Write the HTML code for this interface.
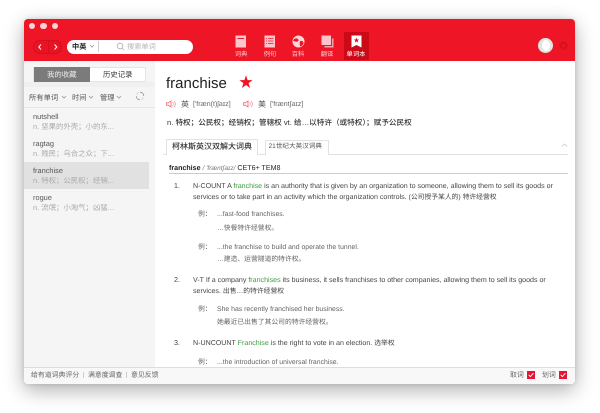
<!DOCTYPE html>
<html lang="zh"><head><meta charset="utf-8"><title>franchise</title>
<style>
*{box-sizing:border-box}
html,body{margin:0;padding:0;width:600px;height:413px;overflow:hidden;background:#fff}
body{font-family:"Liberation Sans","Noto Sans CJK SC",sans-serif;position:relative;text-rendering:geometricPrecision;filter:blur(.3px)}
#win{position:absolute;left:24px;top:19px;width:551px;height:365px;border-radius:4px;background:#fff;box-shadow:0 6px 20px rgba(0,0,0,.32),0 0 5px rgba(0,0,0,.12)}
.a{position:absolute;white-space:nowrap;line-height:12px}
.b{position:absolute}
.g{color:#3a9a3e}
.d{font-size:7.08px;color:#444}
.e{font-size:6.88px;color:#666}
.z{font-size:6.8px}
.l{font-size:6.3px;color:#ffc4cb;text-align:center;width:30px}
.s{font-size:7.3px;color:#555}
.w{font-size:7.4px;color:#555}
.m{font-size:7.4px;color:#aaa}
.f{font-size:6.9px;color:#666}
</style></head><body>
<div id="win"></div>
<!-- header -->
<div class="b" style="left:24px;top:19px;width:551px;height:42px;background:#ee1626;border-radius:4px 4px 0 0"></div>
<div class="b" style="left:28.8px;top:22.8px;width:6.5px;height:6.5px;border-radius:50%;background:#f9d3d6"></div>
<div class="b" style="left:40.3px;top:22.8px;width:6.5px;height:6.5px;border-radius:50%;background:#f9d3d6"></div>
<div class="b" style="left:51.8px;top:22.8px;width:6.5px;height:6.5px;border-radius:50%;background:#f9d3d6"></div>
<!-- nav -->
<div class="b" style="left:33px;top:39.5px;width:29px;height:14px;border-radius:7px;border:1px solid #d40f1e;background:#e91423"></div>
<div class="b" style="left:47.5px;top:40px;width:1px;height:13px;background:#d40f1e"></div>
<svg class="b" style="left:36px;top:42px" width="24" height="10" viewBox="0 0 24 10"><path d="M5 2.5L2.8 5L5 7.5" fill="none" stroke="#fff" stroke-width="1"/><path d="M18.6 2.5L20.8 5L18.6 7.5" fill="none" stroke="#fff" stroke-width="1"/></svg>
<!-- search -->
<div class="b" style="left:67px;top:39.5px;width:126px;height:14px;border-radius:7px;background:#fff"></div>
<div class="a" style="left:72px;top:40.5px;font-size:7.2px;color:#222;font-weight:bold">中英</div>
<svg class="b" style="left:89px;top:44px" width="6" height="5" viewBox="0 0 6 5"><path d="M1 1L3 3.2L5 1" fill="none" stroke="#999" stroke-width=".8"/></svg>
<div class="b" style="left:98px;top:41px;width:1px;height:11px;background:#ccc"></div>
<svg class="b" style="left:116px;top:42px" width="9" height="9" viewBox="0 0 9 9"><circle cx="4" cy="4" r="2.8" fill="none" stroke="#aaa" stroke-width=".8"/><path d="M6 6L8 8" stroke="#aaa" stroke-width=".8"/></svg>
<div class="a" style="left:127px;top:40.5px;font-size:7.2px;color:#b5b5b5">搜索单词</div>
<!-- tools -->
<svg class="b" style="left:235px;top:35px" width="12" height="13" viewBox="0 0 12 13"><rect x=".5" y=".5" width="10.5" height="12" fill="#fbc5cb"/><rect x="2.5" y="3" width="6.5" height="1" fill="#ee1626"/></svg>
<div class="a l" style="left:226px;top:49px">词典</div>
<svg class="b" style="left:264px;top:35px" width="12" height="13" viewBox="0 0 12 13"><rect x=".5" y=".5" width="10.5" height="12" fill="#fbc5cb"/><path d="M2 3.5h1M4 3.5h5.5M2 6h1M4 6h5.5M2 8.5h1M4 8.5h5.5" stroke="#ee1626" stroke-width=".8"/></svg>
<div class="a l" style="left:255px;top:49px">例句</div>
<svg class="b" style="left:292px;top:35px" width="13" height="13" viewBox="0 0 13 13"><circle cx="6.5" cy="6.5" r="6" fill="#fbd5d9"/><path d="M1 5.5C3 2.5 6 3 6.5 5C7 6.5 4.5 7 3.5 6.5C2.5 6.2 1.5 6 1 5.5ZM8.5 6C10 5.5 11.5 6.5 11.5 8C11 10 9.5 11.5 8 11.5C8 9.5 7 7.5 8.5 6Z" fill="#ee1626"/></svg>
<div class="a l" style="left:283px;top:49px">百科</div>
<svg class="b" style="left:321px;top:35px" width="13" height="13" viewBox="0 0 13 13"><path d="M3.5 12.5V11H11V3.5H12.5V12.5Z" fill="#f7a3ac"/><rect x=".5" y=".5" width="9.5" height="9.5" fill="#fbc5cb"/></svg>
<div class="a l" style="left:312px;top:49px">翻译</div>
<div class="b" style="left:343.5px;top:32px;width:25.5px;height:28px;background:#cc0a17;border-radius:1px"></div>
<svg class="b" style="left:351px;top:35px" width="11" height="13" viewBox="0 0 11 13"><path d="M.5 .5H10.5V12.5L5.5 10L.5 12.5Z" fill="#fff"/><path d="M5.5 2.5L6.2 4.5L8.2 4.5L6.6 5.7L7.2 7.6L5.5 6.4L3.8 7.6L4.4 5.7L2.8 4.5L4.8 4.5Z" fill="#d00c1a"/></svg>
<div class="a l" style="left:341px;top:49px;color:#fff">单词本</div>
<!-- avatar gear -->
<div class="b" style="left:538px;top:38px;width:15px;height:15px;border-radius:50%;background:#e4e4e4"></div>
<div class="b" style="left:541.5px;top:39.5px;width:8px;height:11px;border-radius:50%;background:#fff"></div>
<svg class="b" style="left:559px;top:41px" width="9" height="9" viewBox="0 0 9 9"><circle cx="4.5" cy="4.5" r="2.6" fill="none" stroke="#cf1220" stroke-width="1.6"/><circle cx="4.5" cy="4.5" r="3.9" fill="none" stroke="#cf1220" stroke-width="1" stroke-dasharray="1.2 1.2"/></svg>
<!-- sidebar -->
<div class="b" style="left:24px;top:61px;width:131px;height:306px;background:#f5f5f5"></div>
<div class="b" style="left:24px;top:82px;width:131px;height:5px;background:#f0f0f0"></div>
<div class="b" style="left:33px;top:66.5px;width:113px;height:15.5px;background:#fff;border:1px solid #e4e4e4"></div>
<div class="b" style="left:34px;top:67px;width:56px;height:14.5px;background:#7b7b7b"></div>
<div class="a" style="left:47px;top:68.5px;font-size:7.4px;color:#eee">我的收藏</div>
<div class="a" style="left:103px;top:68.5px;font-size:7.4px;color:#333">历史记录</div>
<div class="a s" style="left:29px;top:91.5px">所有单词</div>
<div class="a s" style="left:72px;top:91.5px">时间</div>
<div class="a s" style="left:100px;top:91.5px">管理</div>
<svg class="b" style="left:61px;top:95px" width="6" height="5" viewBox="0 0 6 5"><path d="M1 1L3 3.2L5 1" fill="none" stroke="#999" stroke-width=".8"/></svg>
<svg class="b" style="left:88px;top:95px" width="6" height="5" viewBox="0 0 6 5"><path d="M1 1L3 3.2L5 1" fill="none" stroke="#999" stroke-width=".8"/></svg>
<svg class="b" style="left:116px;top:95px" width="6" height="5" viewBox="0 0 6 5"><path d="M1 1L3 3.2L5 1" fill="none" stroke="#999" stroke-width=".8"/></svg>
<svg class="b" style="left:135px;top:91px" width="10" height="10" viewBox="0 0 10 10"><path d="M5 1.2A3.8 3.8 0 0 1 8.8 5M5 8.8A3.8 3.8 0 0 1 1.2 5" fill="none" stroke="#999" stroke-width=".8"/><path d="M8.4 6.6A3.8 3.8 0 0 1 6.5 8.5M1.6 3.4A3.8 3.8 0 0 1 3.5 1.5" fill="none" stroke="#ccc" stroke-width=".8"/></svg>
<div class="b" style="left:24px;top:107px;width:131px;height:1px;background:#e6e6e6"></div>
<div class="b" style="left:24px;top:162px;width:125px;height:27px;background:#e1e1e1"></div>
<div class="a w" style="left:33px;top:110.5px">nutshell</div>
<div class="a m" style="left:33px;top:121px">n. 坚果的外壳；小的东...</div>
<div class="a w" style="left:33px;top:137.5px">ragtag</div>
<div class="a m" style="left:33px;top:148px">n. 贱民；乌合之众；下...</div>
<div class="a w" style="left:33px;top:164.5px">franchise</div>
<div class="a m" style="left:33px;top:175px">n. 特权；公民权；经销...</div>
<div class="a w" style="left:33px;top:191.5px">rogue</div>
<div class="a m" style="left:33px;top:202px">n. 流氓；小淘气；凶猛...</div>
<!-- head -->
<div class="a" style="left:166px;top:76px;font-size:15px;color:#222;line-height:15px">franchise</div>
<svg class="b" style="left:239px;top:75px" width="14" height="14" viewBox="0 0 14 14"><path d="M7 .3L8.6 5.1H13.6L9.6 8.1L11.1 13L7 10L2.9 13L4.4 8.1L.4 5.1H5.4Z" fill="#ee1626"/></svg>
<svg class="b" style="left:166px;top:100px" width="11" height="8" viewBox="0 0 11 8"><path d="M.5 2.8H2.5L5 1V7L2.5 5.2H.5Z" fill="none" stroke="#ef6a75" stroke-width=".8"/><path d="M6.5 2A3 3 0 0 1 6.5 6M8.2 1A4.5 4.5 0 0 1 8.2 7" fill="none" stroke="#f59aa2" stroke-width=".8"/></svg>
<div class="a" style="left:181px;top:98.5px;font-size:8px;color:#555">英</div>
<div class="a" style="left:193px;top:99px;font-size:7px;color:#666">['fræn(t)ʃaɪz]</div>
<svg class="b" style="left:243px;top:100px" width="11" height="8" viewBox="0 0 11 8"><path d="M.5 2.8H2.5L5 1V7L2.5 5.2H.5Z" fill="none" stroke="#ef6a75" stroke-width=".8"/><path d="M6.5 2A3 3 0 0 1 6.5 6M8.2 1A4.5 4.5 0 0 1 8.2 7" fill="none" stroke="#f59aa2" stroke-width=".8"/></svg>
<div class="a" style="left:258px;top:98.5px;font-size:8px;color:#555">美</div>
<div class="a" style="left:270px;top:99px;font-size:7px;color:#666">['frænt∫aɪz]</div>
<div class="a" style="left:167px;top:116.5px;font-size:7.6px;color:#333;font-weight:500">n. 特权；公民权；经销权；管辖权 vt. 给…以特许（或特权）；赋予公民权</div>
<!-- tabs -->
<div class="b" style="left:163px;top:154px;width:405px;height:1px;background:#e2e2e2"></div>
<div class="b" style="left:166px;top:139px;width:92px;height:16px;background:#fff;border:1px solid #e2e2e2;border-bottom:none"></div>
<div class="a" style="left:172px;top:141px;font-size:8px;color:#333;font-weight:500">柯林斯英汉双解大词典</div>
<div class="b" style="left:265px;top:139.5px;width:64px;height:15px;background:#fff;border:1px solid #e2e2e2;border-bottom:none"></div>
<div class="a" style="left:268.5px;top:141px;font-size:6.6px;color:#555">21世纪大英汉词典</div>
<svg class="b" style="left:561px;top:143px" width="7" height="4" viewBox="0 0 7 4"><path d="M.8 3.4L3.5 1L6.2 3.4" fill="none" stroke="#ccc" stroke-width=".8"/></svg>
<!-- content -->
<div class="a" style="left:169px;top:161.5px;font-size:7.1px;color:#222"><b>franchise</b> <i style="color:#777;font-size:6.5px">/ 'fræntʃaɪz/</i> CET6+ TEM8</div>
<div class="b" style="left:169px;top:173px;width:399px;height:1px;background:#ccc"></div>
<div class="a d" style="left:174px;top:179.5px">1.</div>
<div class="a d" style="left:193px;top:179.5px">N-COUNT A <span class="g">franchise</span> is an authority that is given by an organization to someone, allowing them to sell its goods or</div>
<div class="a d" style="left:193px;top:190.5px">services or to take part in an activity which the organization controls. <span class="z">(公司授予某人的) 特许经营权</span></div>
<div class="a e z" style="left:198px;top:209px">例：</div>
<div class="a e" style="left:217px;top:209px">...fast-food franchises.</div>
<div class="a e z" style="left:217px;top:223px">…快餐特许经营权。</div>
<div class="a e z" style="left:198px;top:242px">例：</div>
<div class="a e" style="left:217px;top:242px">...the franchise to build and operate the tunnel.</div>
<div class="a e z" style="left:217px;top:254px">…建造、运营隧道的特许权。</div>
<div class="a d" style="left:174px;top:274px">2.</div>
<div class="a d" style="left:193px;top:274px">V-T If a company <span class="g">franchises</span> its business, it sells franchises to other companies, allowing them to sell its goods or</div>
<div class="a d" style="left:193px;top:285px">services. <span class="z">出售…的特许经营权</span></div>
<div class="a e z" style="left:198px;top:304px">例：</div>
<div class="a e" style="left:217px;top:304px">She has recently franchised her business.</div>
<div class="a e z" style="left:217px;top:317px">她最近已出售了其公司的特许经营权。</div>
<div class="a d" style="left:174px;top:337px">3.</div>
<div class="a d" style="left:193px;top:337px">N-UNCOUNT <span class="g">Franchise</span> is the right to vote in an election. <span class="z">选举权</span></div>
<div class="a e z" style="left:198px;top:357px">例：</div>
<div class="a e" style="left:217px;top:357px">...the introduction of universal franchise.</div>
<!-- footer -->
<div class="b" style="left:24px;top:367px;width:551px;height:17px;background:#f8f8f8;border-top:1px solid #ddd;border-radius:0 0 4px 4px"></div>
<div class="a f" style="left:31px;top:369.5px">给有道词典评分</div>
<div class="b" style="left:83px;top:372px;width:1px;height:6px;background:#ccc"></div>
<div class="a f" style="left:88px;top:369.5px">满意度调查</div>
<div class="b" style="left:126px;top:372px;width:1px;height:6px;background:#ccc"></div>
<div class="a f" style="left:131px;top:369.5px">意见反馈</div>
<div class="a f" style="left:510px;top:369.5px">取词</div>
<svg class="b" style="left:527px;top:371px" width="8" height="8" viewBox="0 0 8 8"><rect width="8" height="8" fill="#ee1133"/><path d="M1.7 3.8L3.4 5.6L6.4 2.2" fill="none" stroke="#fff" stroke-width=".9"/></svg>
<div class="a f" style="left:542px;top:369.5px">划词</div>
<svg class="b" style="left:559px;top:371px" width="8" height="8" viewBox="0 0 8 8"><rect width="8" height="8" fill="#ee1133"/><path d="M1.7 3.8L3.4 5.6L6.4 2.2" fill="none" stroke="#fff" stroke-width=".9"/></svg>
</body></html>
